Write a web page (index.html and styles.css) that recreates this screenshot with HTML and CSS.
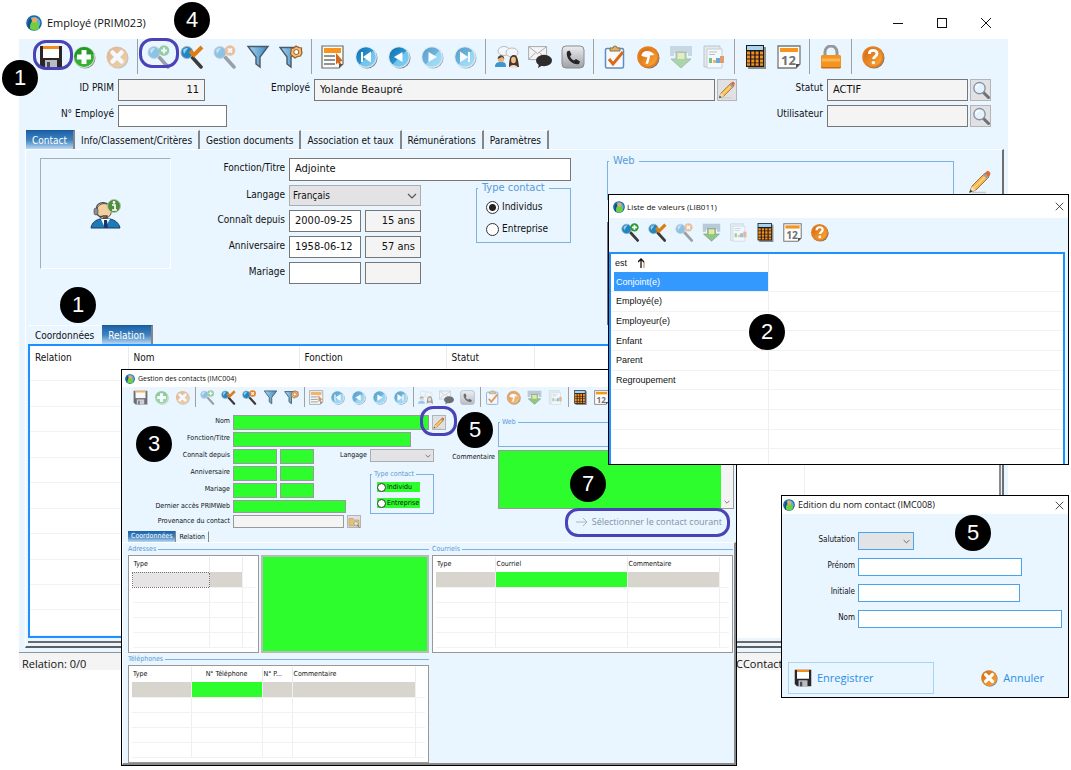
FILE: index.html
```html
<!DOCTYPE html>
<html lang="fr">
<head>
<meta charset="utf-8">
<title>Employé (PRIM023)</title>
<link rel="stylesheet" href="styles.css">
</head>
<body>
<svg class="sprite" aria-hidden="true">
  <defs>
    <linearGradient id="gOrange" x1="0" y1="0" x2="1" y2="1"><stop offset="0" stop-color="#d0660f"/><stop offset="1" stop-color="#ffab3c"/></linearGradient>
    <linearGradient id="gBlue" x1="0" y1="0" x2="1" y2="1"><stop offset="0" stop-color="#0f6fae"/><stop offset="0.5" stop-color="#2b93cc"/><stop offset="0.55" stop-color="#6cc4ee"/><stop offset="1" stop-color="#7fd0f5"/></linearGradient>
    <linearGradient id="gFunnel" x1="0" y1="0" x2="1" y2="0"><stop offset="0" stop-color="#a5d4f0"/><stop offset="1" stop-color="#3a8ac2"/></linearGradient>
    <linearGradient id="gGrey" x1="0" y1="0" x2="0" y2="1"><stop offset="0" stop-color="#ededf0"/><stop offset="1" stop-color="#9fa0a4"/></linearGradient>
    <symbol id="app" viewBox="0 0 16 16"><circle cx="8" cy="8" r="7.800" fill="#1a659e"/><circle cx="8" cy="8" r="6.300" fill="#5fb0de"/><path d="M3.500 14a9 9 0 0 1-1-9l2-2.500L6 6z" fill="#0f5288"/><path d="M4 13.500C4 9 5 6 8.500 6S13 9 13 13.500c-2.500 2-6.500 2-9 0z" fill="#6fd03c"/><circle cx="8.500" cy="5" r="2.600" fill="#f2a65a"/></symbol>
    <symbol id="save" viewBox="0 0 24 24"><path d="M1 1h22v22H4l-3-3z" fill="#2b2527"/><path d="M4 1h16v12H4z" fill="#fff"/><path d="M4 1h16v3H4z" fill="#f58a1f"/><path d="M6 15h12v8H6z" fill="#b9bcc0"/><path d="M8 17h3v6H8z" fill="#4c4b4f"/></symbol>
    <symbol id="add" viewBox="0 0 24 24"><circle cx="13" cy="13" r="10.500" fill="#8a8f94"/><circle cx="12" cy="12" r="10.800" fill="#d5e6d3"/><circle cx="12" cy="12" r="10" fill="#35b233"/><path d="M12 2A10 10 0 0 0 2 12L22 9A10 10 0 0 0 12 2z" fill="#168a1c" opacity=".6"/><path d="M9.500 5h5v4.500H19v5h-4.500V19h-5v-4.500H5v-5h4.500z" fill="#fff"/></symbol>
    <symbol id="cancel" viewBox="0 0 24 24"><circle cx="13" cy="13" r="10.500" fill="#8b8782"/><circle cx="12" cy="12" r="10.500" fill="url(#gOrange)"/><path d="M7.500 7.500l9 9M16.500 7.500l-9 9" stroke="#fff" stroke-width="4.500" stroke-linecap="round"/></symbol>
    <symbol id="lens" viewBox="0 0 24 24"><path d="M12 12l9 10" stroke="#3d3a3b" stroke-width="3.500" stroke-linecap="round"/><circle cx="7" cy="7.500" r="6" fill="#1d86c4" stroke="#a8adb2" stroke-width="1"/><path d="M3 5a5 5 0 0 1 5-2L4 9z" fill="#8ed0f2"/></symbol>
    <symbol id="zadd" viewBox="0 0 24 24"><use href="#lens"/><circle cx="17" cy="5.500" r="5.300" fill="#2f9c37"/><path d="M17 2.500v6M14 5.500h6" stroke="#fff" stroke-width="2"/></symbol>
    <symbol id="zok" viewBox="0 0 24 24"><use href="#lens"/><path d="M10 6l4 4 8-8" fill="none" stroke="#e07d12" stroke-width="4"/></symbol>
    <symbol id="zdel" viewBox="0 0 24 24"><use href="#lens"/><circle cx="17" cy="5.500" r="5.300" fill="#ea7f25"/><path d="M15 3.500l4 4M19 3.500l-4 4" stroke="#fff" stroke-width="2"/></symbol>
    <symbol id="funnel" viewBox="0 0 24 24"><path d="M2 1.500h20L14 12v10l-4-3v-7z" fill="url(#gFunnel)" stroke="#4b5a66" stroke-width="1.400"/></symbol>
    <symbol id="funnelg" viewBox="0 0 24 24"><path d="M1 2.500h18L12 12v10l-4-3v-7z" fill="url(#gFunnel)" stroke="#4b5a66" stroke-width="1.400"/><path d="M17 1l2.500 1.500 3 .5v3L23 8l-1.500 3-3 .5L16 13l-2.500-2-2-1.500.5-3 .5-3L15 3z" fill="#f3bd7b" stroke="#9a5d20" stroke-width="1.200"/><circle cx="17.300" cy="7" r="2.500" fill="#fff" stroke="#9a5d20"/></symbol>
    <symbol id="list" viewBox="0 0 24 24"><path d="M1 1h21v18l-4 4H1z" fill="#fbfbf7" stroke="#6d6a66" stroke-width="1.200"/><path d="M3 3h17v5H3z" fill="#f7941d"/><path d="M3 11h11M3 15h11M3 19h11" stroke="#6f7275" stroke-width="1.600"/><path d="M15 8l7 8-3 .5 2 4-2 1-2-4-2 2z" fill="#d2691e"/><path d="M22 19l-4 4v-4z" fill="#555"/></symbol>
    <symbol id="disc" viewBox="0 0 24 24"><circle cx="13" cy="13" r="10.500" fill="#77808a"/><circle cx="12" cy="12" r="10.800" fill="#dfe8ee"/><circle cx="12" cy="12" r="9.800" fill="url(#gBlue)"/></symbol>
    <symbol id="first" viewBox="0 0 24 24"><use href="#disc"/><path d="M7 7h2v10H7zM17 6.500v11L9 12z" fill="#fff"/></symbol>
    <symbol id="prev" viewBox="0 0 24 24"><use href="#disc"/><path d="M15.500 7v10L7 12z" fill="#fff"/></symbol>
    <symbol id="next" viewBox="0 0 24 24"><use href="#disc"/><path d="M8.500 7v10l8.500-5z" fill="#fff"/></symbol>
    <symbol id="last" viewBox="0 0 24 24"><use href="#disc"/><path d="M15 7h2v10h-2zM7 6.500v11l8-5.500z" fill="#fff"/></symbol>
    <symbol id="people" viewBox="0 0 24 24"><ellipse cx="9" cy="6" rx="6" ry="4.500" fill="#f4f7f9" stroke="#b5bcc2"/><ellipse cx="17" cy="7.500" rx="6" ry="4.500" fill="#f4f7f9" stroke="#b5bcc2"/><path d="M0 22c0-4 2-5 6-5s5 1 5 5z" fill="#3d96cf"/><circle cx="6" cy="14" r="3.200" fill="#e8b27c"/><path d="M2.700 14c0-5 6.600-5 6.600 0l-2-2z" fill="#5b4632"/><path d="M14 22c0-10 2-12 5-12s4 3 5 12z" fill="#4c3527"/><ellipse cx="18.500" cy="15" rx="2.400" ry="3.200" fill="#efc08d"/><path d="M14 23c1-4 8-4 9 0z" fill="#e9e1da"/></symbol>
    <symbol id="mail" viewBox="0 0 24 24"><path d="M.6 1.600h18v13H.6z" fill="#f4f4f4" stroke="#a9abad"/><path d="M.6 1.600l9 7 9-7M.6 14.600l7-7M18.600 14.600l-7-7" fill="none" stroke="#a9abad"/><ellipse cx="16" cy="15.500" rx="8" ry="5.700" fill="#2f2b2c"/><path d="M11 19l-1 4 5-3z" fill="#2f2b2c"/></symbol>
    <symbol id="phone" viewBox="0 0 24 24"><rect x="1" y="1" width="22" height="22" rx="4" fill="url(#gGrey)" stroke="#8a8c8f"/><path d="M6 6.500l2.500-1 2 4-1.500 2c1 2 2 3 4 4l2-1.500 4 2.500-1 2.500c-5 2-14-5-12-12.500z" fill="#262425"/></symbol>
    <symbol id="clip" viewBox="0 0 24 24"><rect x="2.500" y="3.500" width="18" height="19.500" rx="1.500" fill="#f8fafc" stroke="#5b8ec2" stroke-width="1.500"/><path d="M7 6V3h3a2 2 0 0 1 4 0h3v3z" fill="#d9b36a" stroke="#8d7140"/><path d="M6 14l4 5L20 7" fill="none" stroke="#dc6a14" stroke-width="3"/></symbol>
    <symbol id="tee" viewBox="0 0 24 24"><circle cx="13" cy="13" r="10.500" fill="#7c736b"/><circle cx="12" cy="12" r="10.800" fill="#e58020"/><circle cx="12" cy="12" r="9" fill="url(#gOrange)"/><path d="M5.500 11c0-6 9-7 13-1l-5 .5.500 1.500-2 7-2.500-.5 2-6-2-.5z" fill="#fff"/></symbol>
    <symbol id="down" viewBox="0 0 24 24"><path d="M1 1h22v10h-4V8H5v3H1z" fill="#9eb3c2"/><path d="M7 7h10v7h5L12 23 2 14h5z" fill="#5faf42" stroke="#5c7b55"/><path d="M8.500 8h7v6h-7z" fill="#e6df78"/></symbol>
    <symbol id="report" viewBox="0 0 24 24"><path d="M2 1h16v21H2z" fill="#dfe3e6" stroke="#a9afb4"/><path d="M5 4h15v19H5z" fill="#fbfcfc" stroke="#b5babd"/><path d="M7 7h8M7 9.500h6" stroke="#9da3a7"/><path d="M7 13h3v5H7z" fill="#44a33a"/><path d="M11 15h3v3h-3z" fill="#f7941d"/><path d="M14 13h4v5h-4z" fill="#2484c4"/><path d="M18 11h4v7h-4z" fill="#e36a1f"/></symbol>
    <symbol id="calc" viewBox="0 0 24 24"><path d="M4 2h18v22H4z" fill="#8c8c8c"/><path d="M2 0h18v22H2z" fill="#1e1a1b"/><path d="M3 1h16v4H3z" fill="#a7d5f0"/><g fill="#f5901e"><path d="M3 6.500h3v3H3zM7.300 6.500h3v3h-3zM11.600 6.500h3v3h-3zM16 6.500h3v3h-3zM3 10.500h3v3H3zM7.300 10.500h3v3h-3zM11.600 10.500h3v3h-3zM16 10.500h3v3h-3zM3 14.500h3v3H3zM7.300 14.500h3v3h-3zM11.600 14.500h3v3h-3zM16 14.500h3v3h-3zM3 18.300h3v2.500H3zM7.300 18.300h3v2.500h-3zM11.600 18.300h3v2.500h-3zM16 18.300h3v2.500h-3z"/></g></symbol>
    <symbol id="cal" viewBox="0 0 24 24"><path d="M1 1h22v18l-4 4H1z" fill="#fdfdfb" stroke="#7a7774" stroke-width="1.300"/><path d="M3 3h18v4H3z" fill="#f7941d"/><text x="11.500" y="20" text-anchor="middle" font-family="Open Sans, sans-serif" font-weight="700" font-size="13" fill="#6f7173">12</text><path d="M23 19l-4 4v-4z" fill="#4d4d4d"/></symbol>
    <symbol id="lock" viewBox="0 0 24 24"><path d="M6 11V7a6 6 0 0 1 12 0v4" fill="none" stroke="#97989b" stroke-width="3"/><rect x="2" y="10.500" width="20" height="13" rx="1.500" fill="#c46f14"/><rect x="2" y="10" width="20" height="12" rx="1.500" fill="#f59320"/><path d="M3 15h18" stroke="#fbb552" stroke-width="3"/></symbol>
    <symbol id="help" viewBox="0 0 24 24"><circle cx="13" cy="13" r="10.500" fill="#7c736b"/><circle cx="12" cy="12" r="10.800" fill="#e58020"/><circle cx="12" cy="12" r="9" fill="url(#gOrange)"/><path d="M8.300 9c0-5 7.700-4.500 7.700-.5 0 3-3.500 3-3.500 5.500" fill="none" stroke="#fff" stroke-width="2.800"/><circle cx="12.400" cy="17.600" r="1.700" fill="#fff"/></symbol>
    <symbol id="pencil" viewBox="0 0 24 24"><path d="M4 22.500h14" stroke="#c5cbd1" stroke-width="1.500"/><path d="M1.500 22.500L4 16 17 3l4 4L8 20z" fill="#f8b648" stroke="#8a5a1c" stroke-width=".8"/><path d="M6 18L19 5" stroke="#fbd489" stroke-width="1.600"/><path d="M1.500 22.500L4 16l4 4z" fill="#f2dcb8"/><path d="M1.500 22.500l1-3 2 2z" fill="#333"/><path d="M15 5l4 4 2-2-4-4z" fill="#9aa0a6"/><path d="M17 3l1.500-1.500c2-1.500 5 1.500 3.500 3.500L21 7z" fill="#e06a32"/></symbol>
    <symbol id="glass" viewBox="0 0 24 24"><path d="M15 15l7 7" stroke="#6e7073" stroke-width="4" stroke-linecap="round"/><circle cx="10" cy="9.500" r="7.500" fill="#e4f2fd" stroke="#8894a2" stroke-width="1.800"/><path d="M5 9a5 5 0 0 1 5-4" fill="none" stroke="#fff" stroke-width="2"/></symbol>
    <symbol id="folder" viewBox="0 0 24 24"><path d="M2 5h8l2 3h10v12H2z" fill="#e5c07c" stroke="#b08d52"/><circle cx="16" cy="15" r="4" fill="#d6e6f2" stroke="#8b8b8b"/><path d="M19 18l4 5" stroke="#8b6a3a" stroke-width="2"/></symbol>
    <symbol id="agent" viewBox="0 0 32 30"><path d="M1 29c1-6 5-8 9-9h10c5 1 9 4 10 9z" fill="#2079b8" stroke="#123e63"/><path d="M11 20l4 9 5-9z" fill="#fff"/><path d="M14 21h3l1 8h-4z" fill="#16396b"/><circle cx="14" cy="12" r="7.500" fill="#f3cfa0" stroke="#6b543d"/><path d="M7 11C5 4 13 2 18 5" fill="none" stroke="#4a4544" stroke-width="1.200"/><rect x="4" y="9" width="4" height="7" rx="2" fill="#8a8d91" stroke="#444" stroke-width=".6"/><path d="M7 15c2 3 4 3 6 2h4v2h-4" fill="none" stroke="#444" stroke-width="1.300"/><circle cx="24" cy="7" r="6.500" fill="#4d8f3b" stroke="#b9c4b2"/><path d="M22 6h3v5M22 11h5" stroke="#fff" stroke-width="1.700" fill="none"/><circle cx="24" cy="3.400" r="1.300" fill="#fff"/></symbol>
    <symbol id="chev" viewBox="0 0 10 6"><path d="M1 1l4 4 4-4" fill="none" stroke="#555" stroke-width="1.200"/></symbol>
    <symbol id="close" viewBox="0 0 12 12"><path d="M1 1l10 10M11 1L1 11" stroke="#111" stroke-width="1"/></symbol>
  </defs>
</svg>

<main class="desktop">
  <section class="window main-window">
    <header class="titlebar">
      <svg class="app-icon"><use href="#app"/></svg>
      <h1>Employé (PRIM023)</h1>
      <button class="caption" aria-label="Réduire"><svg viewBox="0 0 12 12"><path d="M1 6.500h10" stroke="#111"/></svg></button>
      <button class="caption" aria-label="Agrandir"><svg viewBox="0 0 12 12"><rect x="1.500" y="1.500" width="9" height="9" fill="none" stroke="#111"/></svg></button>
      <button class="caption" aria-label="Fermer"><svg><use href="#close"/></svg></button>
    </header>
    <nav class="toolbar" aria-label="Outils">
      <button aria-label="Enregistrer"><svg><use href="#save"/></svg></button>
      <button aria-label="Ajouter"><svg><use href="#add"/></svg></button>
      <button aria-label="Annuler" class="dim"><svg><use href="#cancel"/></svg></button>
      <i class="sep"></i>
      <button aria-label="Recherche" class="dim"><svg><use href="#zadd"/></svg></button>
      <button aria-label="Exécuter la recherche"><svg><use href="#zok"/></svg></button>
      <button aria-label="Annuler la recherche" class="dim"><svg><use href="#zdel"/></svg></button>
      <button aria-label="Filtre"><svg><use href="#funnel"/></svg></button>
      <button aria-label="Options du filtre"><svg><use href="#funnelg"/></svg></button>
      <i class="sep"></i>
      <button aria-label="Liste"><svg><use href="#list"/></svg></button>
      <button aria-label="Premier"><svg><use href="#first"/></svg></button>
      <button aria-label="Précédent"><svg><use href="#prev"/></svg></button>
      <button aria-label="Suivant" class="soft"><svg><use href="#next"/></svg></button>
      <button aria-label="Dernier" class="soft"><svg><use href="#last"/></svg></button>
      <i class="sep"></i>
      <button aria-label="Rencontre"><svg><use href="#people"/></svg></button>
      <button aria-label="Message"><svg><use href="#mail"/></svg></button>
      <button aria-label="Téléphone"><svg><use href="#phone"/></svg></button>
      <i class="sep"></i>
      <button aria-label="Tâches"><svg><use href="#clip"/></svg></button>
      <button aria-label="Temps"><svg><use href="#tee"/></svg></button>
      <button aria-label="Importer" class="dim"><svg><use href="#down"/></svg></button>
      <button aria-label="Rapport" class="soft"><svg><use href="#report"/></svg></button>
      <i class="sep"></i>
      <button aria-label="Calculatrice"><svg><use href="#calc"/></svg></button>
      <button aria-label="Calendrier"><svg><use href="#cal"/></svg></button>
      <i class="sep"></i>
      <button aria-label="Verrouiller"><svg><use href="#lock"/></svg></button>
      <i class="sep"></i>
      <button aria-label="Aide"><svg><use href="#help"/></svg></button>
    </nav>

    <div class="identity">
      <div class="id-grid">
        <label for="idprim">ID PRIM</label><input id="idprim" class="locked num id-short" value="11" readonly>
        <label for="noemp">N° Employé</label><input id="noemp">
      </div>
      <div class="name-row">
        <label for="emp">Employé</label><input id="emp" class="locked" value="Yolande Beaupré" readonly>
        <button class="mini" aria-label="Modifier le nom"><svg><use href="#pencil"/></svg></button>
      </div>
      <div class="status-grid">
        <label for="statut">Statut</label><input id="statut" class="locked" value="ACTIF" readonly><button class="mini" aria-label="Chercher le statut"><svg><use href="#glass"/></svg></button>
        <label for="util">Utilisateur</label><input id="util" class="locked" readonly><button class="mini" aria-label="Chercher l'utilisateur"><svg><use href="#glass"/></svg></button>
      </div>
    </div>

    <div class="tabs" role="tablist">
      <button role="tab" class="tab active">Contact</button>
      <button role="tab" class="tab">Info/Classement/Critères</button>
      <button role="tab" class="tab">Gestion documents</button>
      <button role="tab" class="tab">Association et taux</button>
      <button role="tab" class="tab">Rémunérations</button>
      <button role="tab" class="tab">Paramètres</button>
    </div>

    <div class="panel">
      <div class="contact">
        <div class="photo"><svg><use href="#agent"/></svg></div>
        <div class="contact-form">
          <label for="fonction">Fonction/Titre</label><input id="fonction" class="wide" value="Adjointe">
          <label for="langage">Langage</label>
          <span class="select two"><select id="langage"><option>Français</option></select><svg><use href="#chev"/></svg></span>
          <fieldset class="type">
            <legend>Type contact</legend>
            <label><input type="radio" name="type" checked>Individus</label>
            <label><input type="radio" name="type">Entreprise</label>
          </fieldset>
          <label for="connait">Connaît depuis</label><input id="connait" value="2000-09-25"><input class="locked num" aria-label="Ancienneté" value="15 ans" readonly>
          <label for="anniv">Anniversaire</label><input id="anniv" value="1958-06-12"><input class="locked num" aria-label="Âge" value="57 ans" readonly>
          <label for="mariage">Mariage</label><input id="mariage"><input class="locked num" aria-label="Années de mariage" readonly>
        </div>
        <div class="notes">
          <fieldset class="web"><legend>Web</legend></fieldset>
          <textarea aria-label="Commentaire"></textarea>
        </div>
        <button class="edit-web" aria-label="Modifier"><svg><use href="#pencil"/></svg></button>
      </div>
      <div class="tabs sub" role="tablist">
        <button role="tab" class="tab plain">Coordonnées</button>
        <button role="tab" class="tab active">Relation</button>
      </div>
      <div class="relations">
        <div class="relation-box">
          <table class="grid relation-grid">
            <colgroup><col class="c97"><col class="c171"><col class="c147"><col class="c88"><col></colgroup>
            <thead><tr><th>Relation</th><th>Nom</th><th>Fonction</th><th>Statut</th><th></th></tr></thead>
            <tbody>
              <tr><td></td><td></td><td></td><td></td><td></td></tr>
              <tr><td></td><td></td><td></td><td></td><td></td></tr>
              <tr><td></td><td></td><td></td><td></td><td></td></tr>
              <tr><td></td><td></td><td></td><td></td><td></td></tr>
              <tr><td></td><td></td><td></td><td></td><td></td></tr>
              <tr><td></td><td></td><td></td><td></td><td></td></tr>
              <tr><td></td><td></td><td></td><td></td><td></td></tr>
              <tr><td></td><td></td><td></td><td></td><td></td></tr>
              <tr><td></td><td></td><td></td><td></td><td></td></tr>
              <tr><td></td><td></td><td></td><td></td><td></td></tr>
              <tr><td></td><td></td><td></td><td></td><td></td></tr>
            </tbody>
          </table>
        </div>
        <div class="relation-rest"><span></span></div>
      </div>
    </div>
    <footer class="statusbar"><span>Relation: 0/0</span><span>CContact</span></footer>
  </section>

  <section class="window popup contacts">
    <header class="titlebar">
      <svg class="app-icon"><use href="#app"/></svg>
      <h2>Gestion des contacts (IMC004)</h2>
    </header>
    <nav class="toolbar" aria-label="Outils contacts">
      <button aria-label="Enregistrer" class="soft"><svg><use href="#save"/></svg></button>
      <button aria-label="Ajouter" class="dim"><svg><use href="#add"/></svg></button>
      <button aria-label="Annuler" class="dim"><svg><use href="#cancel"/></svg></button>
      <i class="sep"></i>
      <button aria-label="Recherche" class="dim"><svg><use href="#zadd"/></svg></button>
      <button aria-label="Exécuter la recherche"><svg><use href="#zok"/></svg></button>
      <button aria-label="Annuler la recherche"><svg><use href="#zdel"/></svg></button>
      <button aria-label="Filtre"><svg><use href="#funnel"/></svg></button>
      <button aria-label="Options du filtre"><svg><use href="#funnelg"/></svg></button>
      <i class="sep"></i>
      <button aria-label="Liste" class="soft"><svg><use href="#list"/></svg></button>
      <button aria-label="Premier" class="soft"><svg><use href="#first"/></svg></button>
      <button aria-label="Précédent" class="soft"><svg><use href="#prev"/></svg></button>
      <button aria-label="Suivant" class="soft"><svg><use href="#next"/></svg></button>
      <button aria-label="Dernier" class="soft"><svg><use href="#last"/></svg></button>
      <i class="sep"></i>
      <button aria-label="Rencontre" class="dim"><svg><use href="#people"/></svg></button>
      <button aria-label="Message" class="soft"><svg><use href="#mail"/></svg></button>
      <button aria-label="Téléphone" class="soft"><svg><use href="#phone"/></svg></button>
      <i class="sep"></i>
      <button aria-label="Tâches" class="soft"><svg><use href="#clip"/></svg></button>
      <button aria-label="Temps" class="soft"><svg><use href="#tee"/></svg></button>
      <button aria-label="Importer" class="soft"><svg><use href="#down"/></svg></button>
      <button aria-label="Rapport" class="dim"><svg><use href="#report"/></svg></button>
      <i class="sep"></i>
      <button aria-label="Calculatrice"><svg><use href="#calc"/></svg></button>
      <button aria-label="Calendrier"><svg><use href="#cal"/></svg></button>
    </nav>
    <div class="contacts-top">
      <div class="search-form">
        <label for="s-nom" class="first">Nom</label>
        <span class="pair span-all"><input id="s-nom" class="green"><button class="mini" aria-label="Modifier le nom"><svg><use href="#pencil"/></svg></button></span>
        <label for="s-fn" class="first">Fonction/Titre</label><input id="s-fn" class="green span-fn">
        <label for="s-cd" class="first">Connaît depuis</label><input id="s-cd" class="green"><input class="green" aria-label="Ancienneté">
        <label for="s-lg">Langage</label>
        <span class="select"><select id="s-lg"><option></option></select><svg><use href="#chev"/></svg></span>
        <label for="s-an" class="first">Anniversaire</label><input id="s-an" class="green"><input class="green" aria-label="Âge">
        <fieldset class="type">
          <legend>Type contact</legend>
          <label><input type="radio" name="stype">Individu</label>
          <label><input type="radio" name="stype">Entreprise</label>
        </fieldset>
        <label for="s-ma" class="first">Mariage</label><input id="s-ma" class="green"><input class="green" aria-label="Années de mariage">
        <label for="s-da" class="first">Dernier accès PRIMWeb</label><input id="s-da" class="green span-date">
        <label for="s-pr" class="first">Provenance du contact</label>
        <span class="pair span-prov"><input id="s-pr" class="locked"><button class="mini" aria-label="Parcourir"><svg><use href="#folder"/></svg></button></span>
      </div>
      <div class="comment-form">
        <fieldset class="web"><legend>Web</legend></fieldset>
        <label for="s-com">Commentaire</label>
        <div class="comment-box"><textarea id="s-com"></textarea><span class="scroll"><svg><use href="#chev"/></svg></span></div>
        <button class="pick"><svg viewBox="0 0 12 10"><path d="M0 5h11M7 1l4 4-4 4" fill="none" stroke="#a9b6c2"/></svg>Sélectionner le contact courant</button>
      </div>
    </div>
    <div class="tabs" role="tablist">
      <button role="tab" class="tab active">Coordonnées</button>
      <button role="tab" class="tab">Relation</button>
    </div>
    <div class="details">
      <section>
        <h3>Adresses</h3>
        <div class="addresses">
          <div class="box">
            <table class="grid">
              <colgroup><col class="c77"><col class="c33"><col></colgroup>
              <thead><tr><th>Type</th><th></th><th></th></tr></thead>
              <tbody>
                <tr><td class="current"></td><td class="sand"></td><td></td></tr>
                <tr><td></td><td></td><td></td></tr><tr><td></td><td></td><td></td></tr>
                <tr><td></td><td></td><td></td></tr><tr><td></td><td></td><td></td></tr>
              </tbody>
            </table>
          </div>
          <textarea class="green" aria-label="Adresse"></textarea>
        </div>
      </section>
      <section>
        <h3>Courriels</h3>
        <div class="box">
          <table class="grid">
            <colgroup><col class="c59"><col class="c132"><col class="c92"><col></colgroup>
            <thead><tr><th>Type</th><th>Courriel</th><th>Commentaire</th><th></th></tr></thead>
            <tbody>
              <tr><td class="sand"></td><td class="lime"></td><td class="sand"></td><td></td></tr>
              <tr><td></td><td></td><td></td><td></td></tr><tr><td></td><td></td><td></td><td></td></tr>
              <tr><td></td><td></td><td></td><td></td></tr><tr><td></td><td></td><td></td><td></td></tr>
            </tbody>
          </table>
        </div>
      </section>
      <section>
        <h3>Téléphones</h3>
        <div class="box">
          <table class="grid">
            <colgroup><col class="c59"><col class="c71"><col class="c30"><col class="c123"><col></colgroup>
            <thead><tr><th>Type</th><th class="mid">N° Téléphone</th><th>N° P...</th><th>Commentaire</th><th></th></tr></thead>
            <tbody>
              <tr><td class="sand"></td><td class="lime"></td><td class="sand"></td><td class="sand"></td><td></td></tr>
              <tr><td></td><td></td><td></td><td></td><td></td></tr><tr><td></td><td></td><td></td><td></td><td></td></tr>
              <tr><td></td><td></td><td></td><td></td><td></td></tr><tr><td></td><td></td><td></td><td></td><td></td></tr>
            </tbody>
          </table>
        </div>
      </section>
    </div>
  </section>

  <section class="window popup values">
    <header class="titlebar">
      <svg class="app-icon"><use href="#app"/></svg>
      <h2>Liste de valeurs (LIB011)</h2>
      <button class="caption" aria-label="Fermer"><svg><use href="#close"/></svg></button>
    </header>
    <nav class="toolbar" aria-label="Outils liste">
      <button aria-label="Recherche"><svg><use href="#zadd"/></svg></button>
      <button aria-label="Exécuter la recherche"><svg><use href="#zok"/></svg></button>
      <button aria-label="Annuler la recherche" class="dim"><svg><use href="#zdel"/></svg></button>
      <button aria-label="Importer" class="soft"><svg><use href="#down"/></svg></button>
      <button aria-label="Rapport" class="dim"><svg><use href="#report"/></svg></button>
      <button aria-label="Calculatrice"><svg><use href="#calc"/></svg></button>
      <button aria-label="Calendrier"><svg><use href="#cal"/></svg></button>
      <button aria-label="Aide"><svg><use href="#help"/></svg></button>
    </nav>
    <div class="values-box">
      <table class="grid">
        <colgroup><col class="c154"><col></colgroup>
        <thead><tr><th>est <svg class="sort" viewBox="0 0 8 10"><path d="M3 10V1M0 4l3-3 3 3" fill="none" stroke="#111" stroke-width="1.300"/><path d="M5 5l1-1v6" fill="none" stroke="#c77a3a"/></svg></th><th></th></tr></thead>
        <tbody>
          <tr><td class="chosen">Conjoint(e)</td><td></td></tr>
          <tr><td>Employé(e)</td><td></td></tr>
          <tr><td>Employeur(e)</td><td></td></tr>
          <tr><td>Enfant</td><td></td></tr>
          <tr><td>Parent</td><td></td></tr>
          <tr><td>Regroupement</td><td></td></tr>
          <tr><td></td><td></td></tr>
          <tr><td></td><td></td></tr>
          <tr><td></td><td></td></tr>
          <tr><td></td><td></td></tr>
        </tbody>
      </table>
    </div>
  </section>

  <section class="window popup edition">
    <header class="titlebar">
      <svg class="app-icon"><use href="#app"/></svg>
      <h2>Edition du nom contact (IMC008)</h2>
      <button class="caption" aria-label="Fermer"><svg><use href="#close"/></svg></button>
    </header>
    <form class="edition-form">
      <label for="e-sal">Salutation</label>
      <span class="select"><select id="e-sal"><option></option></select><svg><use href="#chev"/></svg></span>
      <label for="e-pre">Prénom</label><input id="e-pre" class="w164">
      <label for="e-ini">Initiale</label><input id="e-ini" class="w162">
      <label for="e-nom">Nom</label><input id="e-nom">
    </form>
    <div class="actions">
      <button class="framed"><svg><use href="#save"/></svg>Enregistrer</button>
      <button><svg><use href="#cancel"/></svg>Annuler</button>
    </div>
  </section>

  <i class="ring r-save"></i><i class="ring r-search"></i><i class="ring r-edit"></i><i class="ring r-pick"></i>
  <span class="badge b1">1</span>
  <span class="badge b2">4</span>
  <span class="badge b3">1</span>
  <span class="badge b4">2</span>
  <span class="badge b5">3</span>
  <span class="badge b6">5</span>
  <span class="badge b7">7</span>
  <span class="badge b8">5</span>
</main>
</body>
</html>
```

FILE: styles.css
```css
* { box-sizing: border-box; }

body {
  margin: 0;
  background: #fff;
  color: #111;
  font: 10px/12px "DejaVu Sans Condensed", "DejaVu Sans", sans-serif;
}

.sprite { position: absolute; width: 0; height: 0; }

button, input, select, textarea { font: inherit; color: inherit; margin: 0; border-radius: 0; }
button { padding: 0; border: 0; background: none; display: flex; align-items: center; justify-content: center; white-space: nowrap; }
h1, h2, h3 { margin: 0; font: inherit; }
fieldset { margin: 0; padding: 0; border: 1px solid #7db1e3; min-width: 0; }
legend { padding: 0 4px; margin-left: 1px; color: #5a9bd8; }

input, textarea { width: 100%; min-width: 0; border: 1px solid #777; background: #fff; outline: 0; }
input { height: 100%; padding: 0 5px 2px; }
textarea { resize: none; display: block; overflow: hidden; }
.locked { background: #f4f4f4; }
.num { text-align: right; }
label { white-space: nowrap; text-align: right; }

.desktop { position: relative; min-height: 100vh; overflow: hidden; }
.titlebar { display: flex; align-items: center; background: #fff; font-family: "Open Sans", sans-serif; }
.titlebar .caption:first-of-type { margin-left: auto; }

.toolbar { display: flex; align-items: center; }
.toolbar .sep { flex: none; display: flex; justify-content: center; align-self: stretch; }
.toolbar .sep::before { content: ""; width: 1px; background: #a0a0a0; }
.dim { opacity: .45; }
.soft { opacity: .65; }
.mini { background: #e1e1e3; border: 1px solid #b2b4b8; }

.tabs { display: flex; }
.tab { border-right: 2px solid #868686; border-top: 1px solid #fff; }
.tab.active { color: #fff; border-top-color: #1a5a9c; background: linear-gradient(#1c62a8, #3f82bf 50%, #b9d8f2); }
.tab.plain { border-right-color: transparent; }

.select { position: relative; display: block; }
.select select { appearance: none; width: 100%; height: 100%; padding: 0 3px; border: 1px solid #adadad; background: #e3e3e5; display: block; }
.select svg { position: absolute; pointer-events: none; }

.grid { width: 100%; table-layout: fixed; border-collapse: collapse; background: #fff; }
.grid th { text-align: left; font-weight: 400; border-right: 1px solid #eaeaea; padding: 0; }
.grid td { border-right: 1px solid #efefef; border-bottom: 1px solid #f2f2f2; padding: 0; }
.grid th:last-child, .grid td:last-child { border-right: 0; }
.grid .sand { background: #d8d4ce; }
.grid .lime { background: #2dfd2d; }
.grid .current { background: #e6e4e4; border: 1px dotted #777; }

/* Employee window */
.main-window { margin: 0 63px 0 19px; background: #e9f5ff; }
.main-window > .titlebar { height: 39px; padding: 6px 0 0 7px; font-size: 11px; line-height: 16px; }
.main-window > .titlebar .app-icon { width: 16px; height: 16px; margin-right: 5px; }
.main-window .caption { width: 44px; height: 24px; }
.main-window .caption svg { width: 12px; height: 12px; }
.main-window > .toolbar { height: 35px; padding-left: 15px; }
.main-window > .toolbar button { width: 33px; }
.main-window > .toolbar svg { width: 24px; height: 24px; }
.main-window > .toolbar .sep { width: 9px; }

.identity { display: flex; padding: 5px 17px 3px 0; }
.id-grid, .status-grid, .name-row { display: grid; grid-template-rows: 22px 22px; row-gap: 4px; }
.id-grid { grid-template-columns: 95px 109px; column-gap: 4px; }
.id-short { width: 87px; }
.name-row { flex: 1; grid-template-columns: 83px 1fr 18px; column-gap: 4px; }
.name-row .mini, .status-grid .mini { margin-left: -2px; }
.status-grid { grid-template-columns: 86px 141px 19px; column-gap: 4px; }
.identity label { line-height: 18px; }
.identity .mini svg { width: 18px; height: 18px; }
.identity input, .contact-form input, .contact-form legend { font-size: 11px; }

.main-window > .tabs { height: 19px; margin-left: 7px; }
.main-window .tab { padding: 2px 6px 0 6px; }

.panel { margin: 0 4px 0 6px; border: solid; border-color: #fff #6f6f6f #5e5e5e #fff; border-width: 1px 2px 2px 1px; }
.contact { display: flex; padding: 8px 8px 0 14px; height: 175px; }
.photo { width: 131px; height: 111px; border: 1px solid; border-color: #a5adb5 #fff #fff #a5adb5; display: flex; align-items: center; justify-content: center; }
.photo svg { width: 32px; height: 30px; }
.contact-form { display: grid; grid-template-columns: 114px 72px 56px 146px; grid-template-rows: 23px 21px 22px 22px 22px; gap: 4px; align-content: start; }
.contact-form > label { grid-column: 1; line-height: 20px; }
.contact-form .wide { grid-column: 2 / 5; }
.contact-form .two { grid-column: 2 / 4; }
.contact-form .select svg { width: 10px; height: 6px; right: 4px; top: 8px; }
.contact-form .type { grid-column: 4; grid-row: 2 / 5; width: 95px; height: 58px; justify-self: end; padding-top: 5px; }
.main-window legend { line-height: 6px; font-size: 11px; }
.type label { display: flex; align-items: center; }
.contact-form .type label { height: 22px; padding-left: 9px; gap: 3px; }
.type input { appearance: none; flex: none; border: 1px solid #333; border-radius: 50%; padding: 0; background: #fff; }
.contact-form .type input { width: 13px; height: 13px; }
.type input:checked { background: radial-gradient(#222 0 3px, #fff 4px); }
.notes { flex: 1; margin-left: 36px; display: flex; flex-direction: column; gap: 22px; }
.notes .web { height: 42px; }
.notes textarea { height: 104px; }
.edit-web { align-self: flex-start; margin: 12px 2px 0 14px; }
.edit-web svg { width: 24px; height: 24px; }

.sub { height: 19px; padding-left: 3px; }
.relations { display: flex; margin: 0 1px 3px 2px; height: 299px; padding-bottom: 3px; border-right: 2px solid #8a8a8a; border-bottom: 2px solid #6a6a6a; }
.relation-box { flex: 0 1 706px; border: 2px solid #1e90ff; }
.relation-grid { height: 100%; }
.relation-grid th { height: 22px; padding: 2px 5px 0; }
.relation-rest { flex: 1; background: #fff; display: flex; padding-left: 70px; }
.relation-rest span { border-left: 1px solid #efefef; }

.c97 { width: 98px; } .c171 { width: 171px; } .c147 { width: 147px; } .c88 { width: 88px; }
.c77 { width: 77px; } .c33 { width: 33px; } .c59 { width: 59px; } .c132 { width: 132px; }
.c92 { width: 92px; } .c71 { width: 71px; } .c30 { width: 30px; } .c123 { width: 123px; }
.c154 { width: 157px; }

.statusbar { display: flex; margin-top: 4px; height: 18px; padding-left: 3px; border-top: 1px solid #8f979e; background: #f4f4f4; font: 11px/22px "Open Sans", sans-serif; overflow: hidden; }
.statusbar span:first-child { width: 714px; }

/* Floating windows */
.popup { position: absolute; border: 1px solid #000; background: #e9f5ff; }

.contacts { left: 121px; top: 369px; width: 616px; font-size: 7px; line-height: 9px; }
.contacts .titlebar { height: 17px; padding-left: 3px; font-size: 7px; }
.contacts .app-icon { width: 10px; height: 10px; margin-right: 3px; }
.contacts .toolbar { height: 20px; padding-left: 8px; }
.contacts .toolbar button { width: 21px; flex: none; }
.contacts .toolbar svg { width: 15px; height: 15px; }
.contacts .toolbar .sep { width: 4px; }
.contacts input { padding: 0 2px; border-color: #9a9a9a; }
.green { background: #2dfd2d; }
.contacts legend { line-height: 4px; padding: 0 2px; font-size: 7px; }
.contacts-top { display: flex; padding: 8px 2px 0 0; }
.search-form { display: grid; grid-template-columns: 108px 44px 34px 50px 64px 9px; grid-template-rows: repeat(5, 15px) 13px 13px; gap: 2px 3px; }
.search-form > label { line-height: 12px; }
.search-form .first { grid-column: 1; }
.pair { display: flex; gap: 3px; }
.pair .mini { flex: 0 0 14px; }
.pair svg { width: 12px; height: 12px; }
.span-all { grid-column: 2 / 7; }
.span-fn { grid-column: 2 / 6; width: 178px; }
.span-date { grid-column: 2 / 5; }
.contacts .span-date { width: 113px; }
.span-prov { grid-column: 2 / 5; width: 128px; }
.contacts .select { height: 13px; }
.contacts .select svg { width: 6px; height: 4px; right: 3px; top: 5px; }
.contacts .type { grid-column: 5; grid-row: 4 / 7; height: 42px; margin-top: 6px; }
.contacts .type label { width: 43px; height: 10px; margin: 6px 0 0 6px; background: #2dfd2d; gap: 1px; }
.contacts .type input { width: 9px; height: 9px; border-color: #333; }
.comment-form { flex: 1; display: grid; grid-template-columns: 49px 1fr; gap: 3px; grid-template-rows: 27px 59px 19px; padding-top: 5px; }
.comment-form .web { grid-column: 2; }
.comment-form > label { line-height: 14px; }
.comment-box { display: flex; border: 1px solid #9a9a9a; background: #f4f4f4; }
.comment-box textarea { flex: 1; border: 0; background: #2dfd2d; }
.scroll { width: 12px; display: flex; align-items: flex-end; justify-content: center; padding-bottom: 4px; }
.scroll svg { width: 6px; height: 4px; }
.pick { grid-column: 2; justify-self: end; padding-right: 12px; color: #7e93a8; font: 9px/12px "Open Sans", sans-serif; gap: 4px; }
.pick svg { width: 12px; height: 10px; }
.contacts .tabs { height: 11px; padding-left: 6px; }
.contacts .tab { padding: 0 3px; border-right-width: 1px; }
.contacts .tab.active { border-top: 0; }

.details { display: grid; grid-template-columns: 1fr 1fr; gap: 0 3px; padding: 0 1px 0 5px; border: solid; border-color: #fff #8a8a8a #8a8a8a #fff; border-width: 1px 2px 2px 1px; }
.details h3 { display: flex; align-items: center; gap: 2px; height: 12px; color: #5a9bd8; font-size: 7px; line-height: 9px; }
.details h3::after { content: ""; flex: 1; border-top: 1px solid #7db1e3; }
.box { height: 98px; border: 1px solid #999; background: #fff; padding: 1px 3px; overflow: hidden; }
.box th { height: 15px; padding: 0 1px; white-space: nowrap; }
.box td { height: 15px; }
.box .mid { text-align: center; }
.addresses { display: grid; grid-template-columns: 131px 1fr; gap: 2px; }
.addresses textarea { height: 98px; border: 2px solid #b5bdb5; }

.values { left: 608px; top: 194px; width: 461px; height: 271px; overflow: hidden; font: 9px/12px "Liberation Sans", sans-serif; }
.values .titlebar { height: 23px; padding: 0 2px 0 4px; font-size: 8px; }
.values .app-icon { width: 12px; height: 12px; margin-right: 2px; }
.values .caption, .edition .caption { width: 14px; height: 14px; }
.values .caption svg, .edition .caption svg { width: 9px; height: 9px; }
.values .toolbar { height: 34px; padding: 0 0 6px 8px; }
.values .toolbar button { width: 27px; }
.values .toolbar svg { width: 19px; height: 19px; }
.values-box { margin-right: 3px; border: solid #1e90ff; border-width: 2px 2px 0; background: #fff; }
.values-box .grid { height: 215px; }
.values-box th { height: 18px; padding-left: 4px; }
.values-box td { height: 19px; padding-left: 5px; }
.values-box .chosen { background: linear-gradient(90deg, #fff 3px, #3399ff 3px); color: #fff; }
.sort { width: 8px; height: 10px; margin-left: 8px; vertical-align: -2px; }

.edition { left: 781px; top: 495px; width: 288px; font-size: 8px; line-height: 10px; }
.edition .titlebar { height: 18px; padding: 0 2px 0 1px; font-size: 9px; }
.edition .app-icon { width: 12px; height: 12px; margin-right: 3px; }
.edition-form { display: grid; grid-template-columns: 73px 1fr; grid-template-rows: repeat(4, 18px); gap: 8px 3px; padding: 18px 6px 0 0; }
.edition-form label { line-height: 15px; }
.edition-form input, .edition .select select { border-color: #4ba3ec; }
.edition .select { width: 56px; }
.edition .select svg { width: 7px; height: 5px; right: 4px; top: 7px; }
.w164 { width: 164px; }
.w162 { width: 162px; }
.actions { display: flex; justify-content: space-between; padding: 34px 24px 3px 6px; font: 11px/16px "Open Sans", sans-serif; color: #2a8fe6; }
.actions button { gap: 5px; }
.actions .framed { width: 146px; height: 32px; padding-left: 5px; justify-content: flex-start; border: 1px solid #a8d4f4; }
.actions svg { width: 18px; height: 18px; }

/* Callouts */
.ring { position: absolute; border: 3px solid #4a43b8; border-radius: 13px; pointer-events: none; }
.r-save { left: 33px; top: 40px; width: 40px; height: 30px; }
.r-search { left: 139px; top: 38px; width: 40px; height: 30px; }
.r-edit { left: 420px; top: 406px; width: 37px; height: 30px; }
.r-pick { left: 565px; top: 508px; width: 165px; height: 29px; }
.badge { position: absolute; width: 36px; height: 36px; border-radius: 50%; background: #000; color: #fff; font: 22px/35px "Liberation Sans", sans-serif; text-align: center; }
.b1 { left: 2px; top: 60px; }
.b2 { left: 174px; top: 2px; }
.b3 { left: 60px; top: 287px; }
.b4 { left: 749px; top: 314px; }
.b5 { left: 136px; top: 426px; }
.b6 { left: 457px; top: 412px; }
.b7 { left: 570px; top: 466px; }
.b8 { left: 955px; top: 515px; }
```
